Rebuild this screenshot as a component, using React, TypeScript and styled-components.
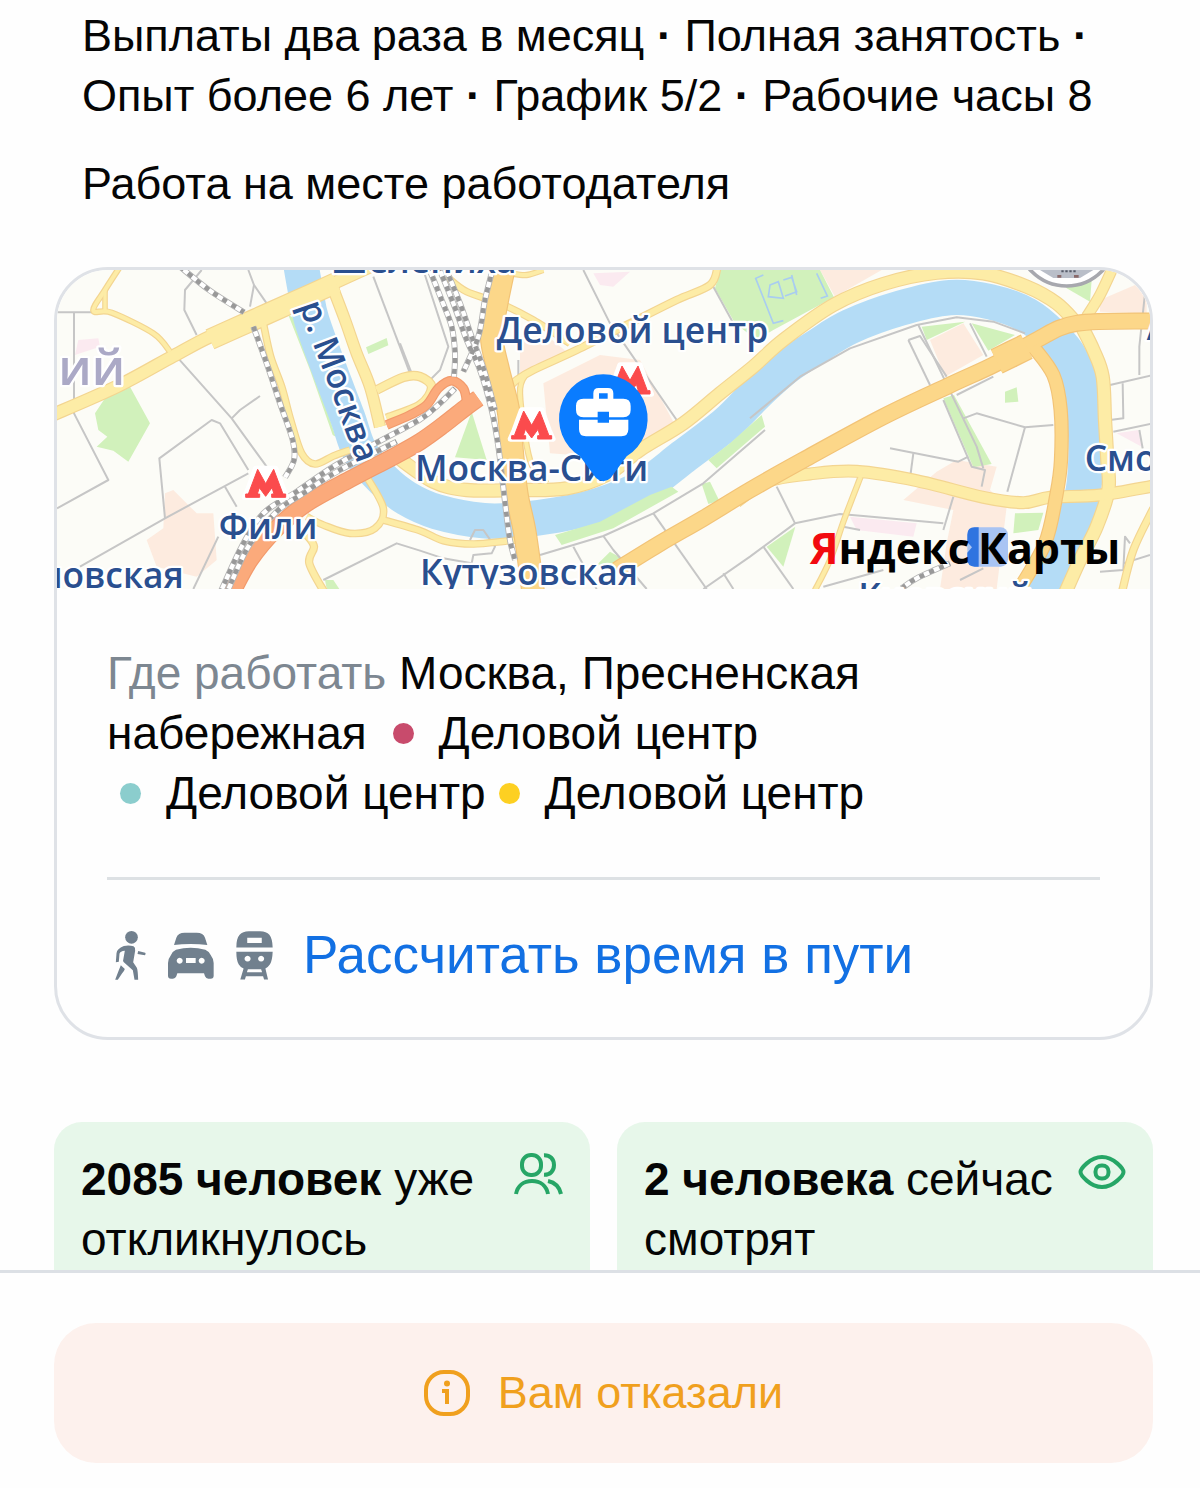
import React from "react";
import styled, { createGlobalStyle } from "styled-components";

const GlobalStyle = createGlobalStyle`
  *, *::before, *::after { box-sizing: border-box; }
  body { margin: 0; background: #fefefe; }
`;

const sans = `"Liberation Sans", Arial, sans-serif`;

const Screen = styled.div`
  height: 100vh;
  display: flex;
  flex-direction: column;
  background: #fefefe;
  color: #050505;
  font-family: ${sans};
  font-size: 46px;
  line-height: 60px;
`;

const Content = styled.main`
  flex: 1;
  min-height: 0;
  overflow-y: auto;
  scrollbar-width: none;
  padding: 6px 47px 0 54px;
`;

const Summary = styled.section`
  display: flex;
  flex-direction: column;
  gap: 28px;
  padding-left: 28px;
  font-size: 45px;
`;

const Line = styled.p`
  margin: 0;
`;

const PlaceCard = styled.section`
  margin-top: 53px;
  border: 3px solid #dfe2e7;
  border-radius: 54px;
  overflow: hidden;
`;

const MapView = styled.svg`
  display: block;
  width: 100%;
  height: auto;
`;

const PlaceBody = styled.div`
  padding: 54px 50px 52px;
`;

const Address = styled.p`
  margin: 0;
  padding-bottom: 54px;
  border-bottom: 3px solid #dde1e4;
`;

const Muted = styled.span`
  color: #7d8791;
`;

const Station = styled.span`
  display: inline-block;
`;

const Dot = styled.span<{ $color: string }>`
  display: inline-block;
  width: 21px;
  height: 21px;
  margin: 0 25px 0 13px;
  border-radius: 50%;
  vertical-align: 5px;
  background: ${(p) => p.$color};
`;

const RouteLink = styled.a`
  display: flex;
  align-items: center;
  margin-top: 45px;
  padding-left: 8px;
  color: #1270e3;
  font-size: 53px;
  text-decoration: none;
`;

const Modes = styled.span`
  display: flex;
  gap: 22px;
  margin-right: 30px;
  color: #71808e;
`;

const Stats = styled.section`
  display: grid;
  grid-template-columns: 1fr 1fr;
  gap: 27px;
  margin-top: 82px;
`;

const Stat = styled.div`
  display: flex;
  justify-content: space-between;
  align-items: flex-start;
  padding: 27px 27px 40px;
  border-radius: 28px;
  background: #e7f7ea;

  svg {
    flex: none;
    margin-top: 4px;
    color: #26a666;
  }
`;

const Footer = styled.footer`
  flex: none;
  padding: 50px 47px 25px 54px;
  border-top: 3px solid #dce0e5;
  background: #fefefe;
`;

const StatusButton = styled.button`
  display: flex;
  align-items: center;
  justify-content: center;
  gap: 28px;
  width: 100%;
  padding: 40px;
  border: 0;
  border-radius: 42px;
  background: #fdf1ed;
  color: #f0a01e;
  font: inherit;
  font-size: 45px;
`;

type Pt = [number, number];

/* Smooth curve through a list of points (Catmull-Rom as cubic Béziers). */
function curve(p: Pt[]): string {
  let d = `M${p[0][0]},${p[0][1]}`;
  for (let i = 0; i < p.length - 1; i++) {
    const a = p[i - 1] ?? p[i];
    const b = p[i];
    const c = p[i + 1];
    const e = p[i + 2] ?? c;
    d += `C${b[0] + (c[0] - a[0]) / 6},${b[1] + (c[1] - a[1]) / 6} ${c[0] - (e[0] - b[0]) / 6},${c[1] - (e[1] - b[1]) / 6} ${c[0]},${c[1]}`;
  }
  return d;
}

const river: Pt[] = [
  [752, 10], [768, 100], [785, 180], [835, 320], [892, 470], [930, 575], [1000, 660], [1070, 715],
  [1160, 755], [1300, 782], [1400, 780], [1520, 765], [1650, 735], [1780, 680], [1900, 590],
  [2030, 490], [2120, 400], [2210, 320], [2300, 260], [2400, 200], [2550, 145], [2700, 113],
  [2820, 125], [2930, 165], [3010, 230], [3065, 300], [3097, 400], [3108, 550], [3100, 690],
  [3065, 800], [3020, 900], [2975, 1000],
];

type Road = { pts: Pt[]; w: number };

const yellowRoads: Road[] = [
  { w: 36, pts: [[0, 468], [200, 380], [370, 288], [480, 230], [610, 178], [740, 120], [850, 70], [970, 15]] },
  { w: 60, pts: [[480, 238], [610, 180], [740, 122], [860, 68]] },
  { w: 14, pts: [[210, 20], [165, 90], [130, 152], [185, 158], [310, 220], [360, 275]] },
  { w: 12, pts: [[165, 90], [165, 155]] },
  { w: 18, pts: [[640, 190], [662, 290], [695, 380], [722, 480], [755, 580], [795, 612], [850, 588], [900, 570]] },
  { w: 32, pts: [[845, 75], [885, 180], [920, 280], [960, 380], [990, 500]] },
  { w: 24, pts: [[980, 390], [1060, 352], [1110, 350], [1145, 382], [1110, 435], [1010, 475]] },
  { w: 18, pts: [[950, 650], [1000, 745], [975, 805], [900, 820], [820, 795], [770, 770]] },
  { w: 18, pts: [[1000, 780], [1110, 812], [1180, 842], [1270, 852], [1370, 843], [1440, 836]] },
  { w: 20, pts: [[770, 825], [792, 860], [778, 910], [825, 1000]] },
  { w: 18, pts: [[1190, 50], [1250, 95], [1350, 130], [1450, 180], [1560, 250]] },
  { w: 14, pts: [[1380, 40], [1430, 45], [1480, 30]] },
  { w: 20, pts: [[1370, 390], [1400, 360], [1450, 330], [1580, 270], [1740, 190], [1880, 120], [1980, 75], [2003, 20]] },
  { w: 14, pts: [[1430, 340], [1410, 400], [1440, 600], [1490, 670]] },
  { w: 38, pts: [[1040, 590], [1150, 665], [1250, 690], [1400, 690], [1550, 685], [1670, 645], [1770, 570], [1900, 490], [2010, 400], [2110, 320], [2200, 240], [2350, 135], [2500, 72], [2660, 38], [2800, 40], [2930, 80], [3020, 130], [3080, 190]] },
  { w: 38, pts: [[3090, 190], [3130, 270], [3158, 350], [3165, 480], [3172, 600], [3175, 690], [3140, 800], [3090, 900], [3045, 1000]] },
  { w: 30, pts: [[3110, 170], [3150, 105], [3190, 20]] },
  { w: 34, pts: [[2060, 725], [2150, 665], [2280, 642], [2420, 634], [2600, 662], [2800, 712], [2920, 728], [3000, 712], [3150, 705], [3310, 678]] },
  { w: 14, pts: [[2432, 650], [2382, 780], [2340, 900], [2290, 1000]] },
  { w: 20, pts: [[3310, 745], [3250, 870], [3215, 1000]] },
];

const orangeRoads: Road[] = [
  { w: 66, pts: [[1365, 10], [1340, 130], [1325, 230], [1345, 330], [1375, 450], [1385, 560], [1400, 700], [1425, 820], [1450, 1000]] },
  { w: 46, pts: [[1700, 930], [1830, 850], [1960, 775], [2100, 690], [2260, 600], [2500, 470], [2700, 375], [2840, 310], [2960, 240], [3080, 190], [3310, 183]] },
  { w: 76, pts: [[2840, 304], [2930, 260]] },
  { w: 38, pts: [[2950, 260], [3010, 345], [3032, 450], [3033, 600], [3020, 700], [2985, 850], [2900, 1000]] },
];

const redRoads: Road[] = [
  { w: 24, pts: [[1010, 495], [1080, 465], [1130, 435], [1165, 385], [1205, 362], [1240, 385], [1250, 425]] },
  { w: 48, pts: [[545, 1000], [600, 900], [680, 805], [770, 730], [900, 658], [1030, 590], [1110, 545], [1180, 495], [1250, 440], [1285, 415]] },
];

const railways: Pt[][] = [
  [[390, 20], [480, 92], [582, 157]],
  [[610, 200], [650, 310], [690, 430], [728, 540], [732, 600], [705, 652]],
  [[510, 1000], [575, 860], [640, 760], [740, 695], [850, 620], [980, 548], [1110, 478], [1170, 430], [1215, 385]],
  [[530, 1000], [595, 860], [680, 755], [760, 700], [870, 630], [1040, 545]],
  [[1135, 20], [1175, 120], [1205, 200], [1215, 280], [1212, 350]],
  [[1165, 20], [1210, 130], [1250, 240], [1290, 330], [1325, 450], [1345, 560], [1362, 700], [1378, 830], [1395, 900]],
  [[1185, 20], [1230, 130], [1265, 230], [1302, 330], [1335, 450]],
  [[1330, 20], [1305, 120], [1285, 230], [1240, 335]],
  [[2555, 985], [2600, 955], [2700, 910]],
];

const streets = [
  "21,157 150,157", "72,157 72,460 175,660 21,745", "455,30 405,90 403,150 440,225", "595,30 612,75 600,140", "612,75 650,130",
  "380,290 545,475 650,620", "545,475 570,450 630,408", "595,630 510,490 485,480 328,595 345,775", "90,920 345,775 595,640",
  "525,680 560,740", "505,830 430,987", "970,50 1080,340", "820,960 1040,850 1110,872 1180,895 1265,910",
  "1265,910 1270,885 1325,880 1335,860 1300,810 1275,810 1260,840", "1120,30 1195,260 1170,330 1130,370", "1050,250 1085,340",
  "1600,30 1680,190 1880,480", "1990,80 2050,190", "1405,300 1405,350", "1470,885 1660,828 1810,760 1960,670 2145,510",
  "1570,860 1640,987", "1660,828 1690,870 1790,987", "1810,760 1970,987", "1960,987 2100,890 2235,790 2370,762 2440,768 2680,790",
  "2020,940 2050,987", "2180,680 2235,790", "2140,860 2230,987", "2240,590 2255,620", "2100,475 2250,350 2400,265 2600,195 2720,172 2830,185 2925,220",
  "2605,195 2780,560 2800,625", "2575,240 2640,375", "2575,240 2610,228 2690,350", "2760,190 2810,290", "2680,420 2765,620 2805,630 2795,680",
  "2720,405 2830,350", "2740,475 2780,460 2925,502 3010,495", "2925,502 2872,695", "2520,565 2725,605 2755,590", "2590,580 2582,640",
  "2710,710 2680,810", "3285,100 3268,260 3268,345", "3180,375 3310,345", "3180,480 3220,475 3218,370", "3190,515 3310,490", "3268,510 3278,565",
  "2320,980 2500,930", "2730,960 2800,925", "3150,935 3220,930 3225,830 3240,850", "3220,910 3300,885", "2380,800 2430,810",
];

const greens = [
  "165,415 240,380 300,490 235,605 190,572 140,560 172,530 145,510 135,460", "948,262 1010,234 1015,256 955,282",
  "715,165 733,175 790,320 857,530 848,525 780,330", "1265,455 1310,600 1215,592", "825,960 850,960 868,987 830,987",
  "1995,85 2010,30 2310,30 2352,112 2170,210 2120,240 2055,190", "1515,825 1650,785 1800,705 1865,680 1885,695 1690,805 1535,855",
  "1975,600 2040,550 2135,465 2145,500 2000,625", "1955,672 1980,665 2008,722 1975,732", "1640,915 1680,875 1715,895 1700,940",
  "2615,200 2745,185 2630,240", "2765,190 2895,225 2815,272", "2680,415 2712,405 2825,612 2770,622",
  "2865,395 2900,382 2905,425 2865,428", "2895,760 2980,758 2965,810 2890,820", "2150,860 2236,800 2200,920", "3040,60 3125,60 3120,125 3050,85",
];

const peaches = [
  "345,700 370,690 440,760 490,760 500,900 440,950 320,920 290,840 340,805", "1410,230 1500,235 1550,275 1410,340",
  "1480,370 1650,285 1770,300 1870,485 1790,545 1640,590 1500,580", "2310,30 2495,30 2355,110",
  "2640,240 2740,190 2800,285 2685,350", "2560,720 2660,635 2720,600 2840,620 2820,690 2870,740 2840,987 2670,987 2690,850 2710,750",
  "3150,120 3290,60 3290,160 3150,155",
];

const pinks = ["85,240 145,235 150,260 75,285", "1630,40 1740,35 1690,80 1650,75", "2400,770 2600,790 2590,830 2420,810", "3200,520 3265,510 3275,560"];

function Roads({ list, fill, edge }: { list: Road[]; fill: string; edge: string }) {
  return (
    <g fill="none" strokeLinejoin="round">
      {list.map((r, i) => (
        <path key={i} d={curve(r.pts)} stroke={edge} strokeWidth={r.w + 5} />
      ))}
      {list.map((r, i) => (
        <path key={i} d={curve(r.pts)} stroke={fill} strokeWidth={r.w - 2} />
      ))}
    </g>
  );
}

const metroShape = "M0 87V77H8L36 3L60 46L84 3L112 77H120V87H78V77H85L79 58L60 84L41 58L35 77H42V87Z";

function Metro({ x, y }: { x: number; y: number }) {
  return (
    <g transform={`translate(${x} ${y})`} strokeLinejoin="round">
      <path d="M-4 87L8 60L30 0H90L112 60L124 87Z" fill="#fff" stroke="#fff" strokeWidth="16" />
      <path d={metroShape} fill="#fb4b4d" stroke="#fb4b4d" strokeWidth="3" />
    </g>
  );
}

const Label = styled.text<{ $size?: number; $fill?: string }>`
  font-family: "Open Sans", "Noto Sans", sans-serif;
  font-weight: 600;
  font-size: ${(p) => p.$size ?? 106}px;
  fill: ${(p) => p.$fill ?? "#2a4f8f"};
  stroke: #fff;
  stroke-width: 14px;
  stroke-linejoin: round;
  paint-order: stroke;
`;

const LogoText = styled.text`
  font-family: "Open Sans", "Noto Sans", sans-serif;
  font-weight: 700;
  font-size: 129px;
`;

function CityMap() {
  return (
    <MapView viewBox="21 30 3279 957" role="img" aria-label="Карта">
      <rect x="0" y="0" width="3320" height="1000" fill="#fcfcf7" />
      {peaches.map((p) => <polygon key={p} points={p} fill="#fdebdf" />)}
      {pinks.map((p) => <polygon key={p} points={p} fill="#fbeaf0" />)}
      {greens.slice(0, 5).map((p) => <polygon key={p} points={p} fill="#d1f1bb" />)}
      <path d={curve(river)} fill="none" stroke="#b4dcf6" strokeWidth="106" />
      {greens.slice(5).map((p) => <polygon key={p} points={p} fill="#d1f1bb" />)}
      <g fill="none" stroke="#a9cdf0" strokeWidth="5">
        <path d="M2140 45L2117 55L2170 190L2200 182M2300 40L2332 108L2312 115M2160 75L2185 65L2200 115L2155 110ZM2200 60L2225 52L2240 95L2205 108M2225 45L2240 105" />
      </g>
      <g fill="none" stroke="#c6c6c6" strokeWidth="6" strokeLinejoin="round">
        {streets.map((s) => <polyline key={s} points={s} />)}
      </g>
      <Roads list={yellowRoads} fill="#fdeca6" edge="#f3d591" />
      <Roads list={orangeRoads} fill="#fcd789" edge="#f2c377" />
      <Roads list={redRoads} fill="#fbaa7b" edge="#f29a6c" />
      <g fill="none">
        {railways.map((r, i) => <path key={i} d={curve(r)} stroke="#b5b5b5" strokeWidth="18" />)}
        {railways.map((r, i) => <path key={i} d={curve(r)} stroke="#fff" strokeWidth="13" />)}
        {railways.map((r, i) => <path key={i} d={curve(r)} stroke="#999" strokeWidth="14" strokeDasharray="15 17" />)}
      </g>
      <circle cx="3050" cy="-70" r="148" fill="#fff" stroke="#a7a8ae" strokeWidth="11" />
      <path d="M2970 30H3130L3090 54H3010Z" fill="#b9bec8" />
      <path d="M3034 34H3080" stroke="#555b68" strokeWidth="6" strokeDasharray="7 5" />
      <path d="M3022 49H3034M3072 49H3086" stroke="#8a6a6a" strokeWidth="8" />

      <Metro x={587} y={625} />
      <Metro x={1385} y={450} />
      <Metro x={1680} y={315} />

      <Label x="25" y="376" $size={148} $fill="#aba9c6">ий</Label>
      <Label x="506" y="836">Фили</Label>
      <Label x="-31" y="984">новская</Label>
      <Label x="842" y="38">Шелепиха</Label>
      <Label x="1340" y="250">Деловой центр</Label>
      <Label x="1095" y="662">Москва-Сити</Label>
      <Label x="1110" y="974">Кутузовская</Label>
      <Label x="3104" y="632">Смоленская</Label>
      <Label x="2425" y="1046">Киевский</Label>
      <Label x="3290" y="240">А</Label>
      <path id="river-name" d="M748,136 C775,215 795,270 825,345 C855,420 885,520 950,680" fill="none" />
      <Label $size={103}>
        <textPath href="#river-name">р. Москва</textPath>
      </Label>

      <path d="M1660 343a133 133 0 0 1 70 246L1682 654Q1660 674 1638 654L1590 589A133 133 0 0 1 1660 343Z" fill="#0a7cff" />
      <g fill="#fff">
        <path
          fillRule="evenodd"
          d="M1630 416V400Q1630 384 1646 384H1674Q1690 384 1690 400V416H1720Q1742 416 1742 438V450Q1742 472 1720 472H1677V455H1643V472H1600Q1578 472 1578 450V438Q1578 416 1600 416ZM1647 416H1673V400H1647Z"
        />
        <path d="M1587 479H1643V488H1677V479H1735V508Q1735 529 1714 529H1608Q1587 529 1587 508Z" />
      </g>

      <rect x="2752" y="802" width="122" height="118" rx="22" fill="#a9c4f3" />
      <path d="M2774 802H2786V920H2774Q2752 920 2752 898V878L2766 862L2752 846V824Q2752 802 2774 802Z" fill="#2f74e0" />
      <LogoText x="2280" y="912"><tspan fill="#f20a0f">Я</tspan>ндекс</LogoText>
      <LogoText x="2784" y="912">Карты</LogoText>
    </MapView>
  );
}

function WalkIcon() {
  return (
    <svg width="31" height="49" viewBox="78 90 92 147" fill="currentColor" aria-hidden="true">
      <circle cx="127" cy="109" r="19" />
      <path d="M104 135Q120 132 133 136Q139 139 138 149L132 184L143 200Q146 206 147 236H136L131 208L104 184Q100 180 103 172L107 149Q93 150 91 158L89 182L80 184L82 157Q83 143 104 135Z" />
      <path d="M95 193L107 204Q105 211 99 217L86 236H78L88 210Z" />
      <path d="M147 150L168 155Q171 159 167 163L145 159Z" />
    </svg>
  );
}

function CarIcon() {
  return (
    <svg width="46" height="49" viewBox="240 90 138 147" fill="currentColor" aria-hidden="true">
      <path d="M258 132L265 110Q270 95 290 95H326Q346 95 351 110L358 132Q335 129 308 129T258 132Z" />
      <path
        fillRule="evenodd"
        d="M264 146Q308 134 352 146Q362 150 368 162Q376 172 377 186V224Q377 233 368 233H361Q354 233 351 226L348 217H268L265 226Q262 233 255 233H249Q240 233 240 224V186Q241 172 249 162Q254 150 264 146ZM275 170a9 9 0 1 0 .1 0ZM341 170a9 9 0 1 0 .1 0ZM294 171V186H323V171Z"
      />
    </svg>
  );
}

function TrainIcon() {
  return (
    <svg width="37" height="49" viewBox="437 90 112 147" fill="currentColor" aria-hidden="true">
      <path fillRule="evenodd" d="M438 139Q438 112 448 101Q457 90 476 90H510Q529 90 538 101Q547 112 548 139ZM471 110V126H515V110Z" />
      <path
        fillRule="evenodd"
        d="M438 152H548Q547 178 540 190Q533 200 526 203L534 236H522L519 226H467L464 236H450L460 203Q450 199 445 190Q438 178 438 152ZM472 164a9 9 0 1 0 .1 0ZM513 164a9 9 0 1 0 .1 0ZM473 205L470 214H516L513 205Z"
      />
    </svg>
  );
}

function PeopleIcon() {
  return (
    <svg width="49" height="42" viewBox="0 0 49 42" fill="none" stroke="currentColor" strokeWidth="4" aria-hidden="true">
      <rect x="8" y="2" width="19" height="20" rx="9" />
      <path d="M30 2.2C36 2 40 6 40 12S36 22 30 21.800" />
      <path d="M2 41C3.500 33 9.500 28 18 28S32.500 33 34 41" />
      <path d="M34 28C41 29.500 45.500 34 47 41" />
    </svg>
  );
}

function EyeIcon() {
  return (
    <svg width="48" height="38" viewBox="0 0 48 38" fill="none" stroke="currentColor" strokeWidth="4" aria-hidden="true">
      <path d="M2.500 19C2.500 16 12 4 24 4S45.500 16 45.500 19S36 34 24 34S2.500 22 2.500 19Z" />
      <rect x="17.500" y="12.500" width="13" height="13" rx="6" />
    </svg>
  );
}

function InfoIcon() {
  return (
    <svg width="46" height="46" viewBox="0 0 46 46" fill="none" aria-hidden="true">
      <rect x="2" y="2" width="42" height="42" rx="18" stroke="currentColor" strokeWidth="4" />
      <circle cx="23" cy="13.500" r="3" fill="currentColor" />
      <path d="M18 19H25V34H21V23H18Z" fill="currentColor" />
    </svg>
  );
}

export default function App() {
  return (
    <>
      <GlobalStyle />
      <Screen>
        <Content>
          <Summary>
            <Line>
              Выплаты два раза в месяц <b>·</b> Полная занятость <b>·</b> Опыт более 6 лет <b>·</b> График 5/2 <b>·</b> Рабочие часы 8
            </Line>
            <Line>Работа на месте работодателя</Line>
          </Summary>

          <PlaceCard>
            <CityMap />
            <PlaceBody>
              <Address>
                <Muted>Где работать</Muted> Москва, Пресненская набережная{" "}
                <Station><Dot $color="#c84b6c" />Деловой центр</Station>{" "}
                <Station><Dot $color="#8bcdcd" />Деловой центр</Station>
                <Station><Dot $color="#fdd022" />Деловой центр</Station>
              </Address>
              <RouteLink href="#route">
                <Modes>
                  <WalkIcon />
                  <CarIcon />
                  <TrainIcon />
                </Modes>
                Рассчитать время в пути
              </RouteLink>
            </PlaceBody>
          </PlaceCard>

          <Stats>
            <Stat>
              <span><b>2085 человек</b> уже откликнулось</span>
              <PeopleIcon />
            </Stat>
            <Stat>
              <span><b>2 человека</b> сейчас смотрят</span>
              <EyeIcon />
            </Stat>
          </Stats>
        </Content>

        <Footer>
          <StatusButton type="button">
            <InfoIcon />
            Вам отказали
          </StatusButton>
        </Footer>
      </Screen>
    </>
  );
}
